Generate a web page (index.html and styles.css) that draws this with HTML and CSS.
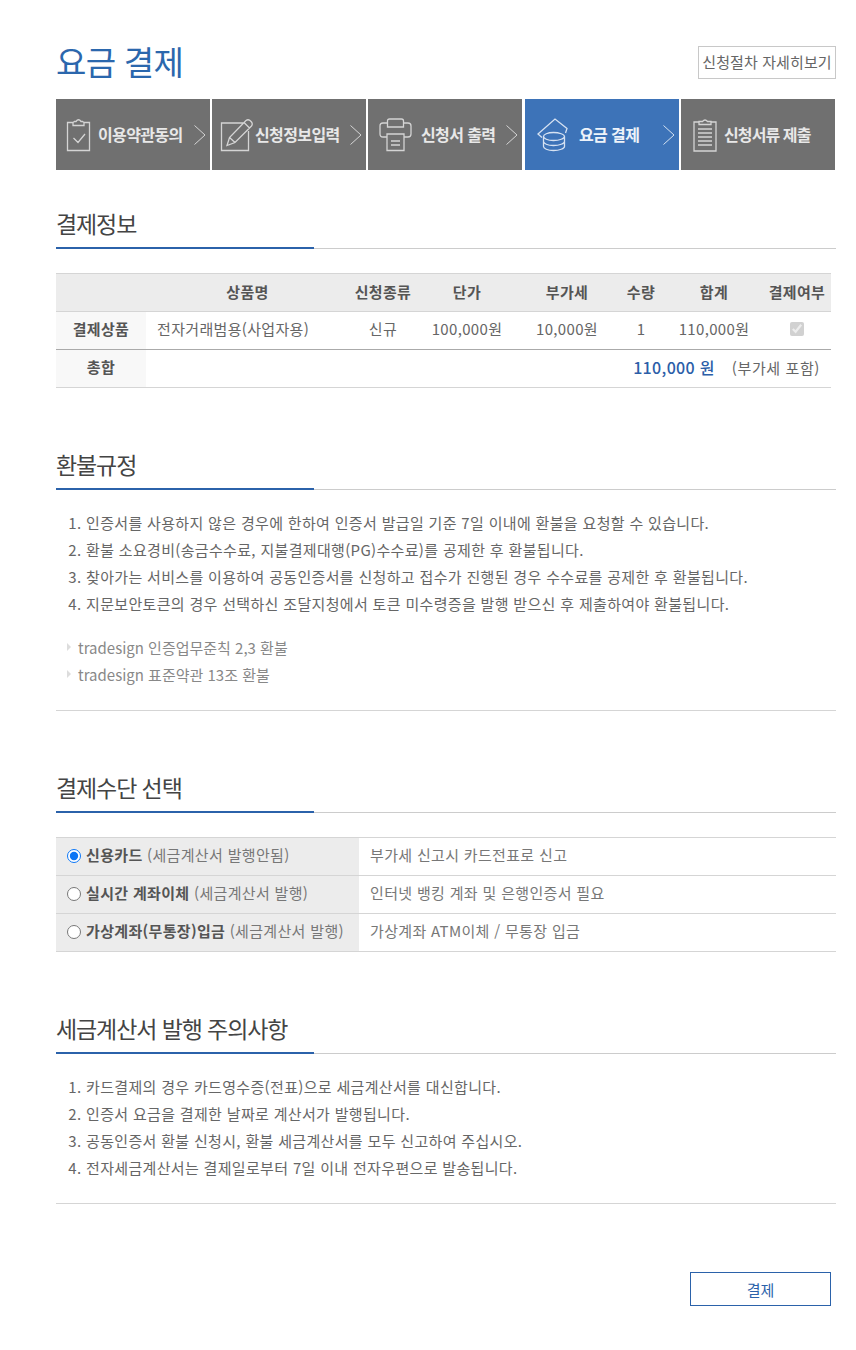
FILE: index.html
```html
<!DOCTYPE html>
<html lang="ko">
<head>
<meta charset="utf-8">
<title>요금 결제</title>
<link rel="stylesheet" href="styles.css">
</head>
<body>
<main class="page">
  <header class="top">
    <h1 class="title">요금 결제</h1>
    <a class="guide" href="#">신청절차 자세히보기</a>
  </header>

  <ol class="steps">
    <li class="step s1">
      <svg class="ico" width="25" height="34" viewBox="0 0 25 34"><path d="M7 4.500H1.500v28h22v-28H18M7 4.500l1.500-1H10Q12.500 0 15 3.500h1.500l1.500 1V7.500H7ZM7.500 20l4.500 4.500 7-8.500"/></svg>
      <span class="lbl">이용약관동의</span>
      <svg class="chev" width="12" height="20" viewBox="0 0 12 20"><path d="M.500.500l10.500 9.500-10.500 9.500"/></svg>
    </li>
    <li class="step s2">
      <svg class="ico" width="33" height="34" viewBox="0 0 33 34"><path d="M24 5H1.500v27.500h27V13M7 27.500l2.500-8L26 2.500q2-1.500 4 0l1.500 1.500q1.500 2 0 4L15 24.500ZM9.500 19.500l5.500 5M24 4.500l5.500 5.500M7 27.500l3 -1"/></svg>
      <span class="lbl">신청정보입력</span>
      <svg class="chev" width="12" height="20" viewBox="0 0 12 20"><path d="M.500.500l10.500 9.500-10.500 9.500"/></svg>
    </li>
    <li class="step s3">
      <svg class="ico" width="33" height="34" viewBox="0 0 33 34"><path d="M8 19H4q-3 0-3-3V8q0-3 3-3h4M25 5h4q3 0 3 3v8q0 3-3 3h-4M8.500 9V3q0-2 2-2h12q2 0 2 2v6ZM8 16h17v16.500H8ZM12 23h9M12 27h9"/></svg>
      <span class="lbl">신청서 출력</span>
      <svg class="chev" width="12" height="20" viewBox="0 0 12 20"><path d="M.500.500l10.500 9.500-10.500 9.500"/></svg>
    </li>
    <li class="step s4 current">
      <svg class="ico" width="33" height="34" viewBox="0 0 33 34"><path d="M5 19.500L1 16 18 1l12 9.500-1.500 4.500M6.500 18.500c0-2 4-4 10-4s11 2 11 4-5 4-11 4-10-2-10-4ZM6.500 18.500v10c0 2 4 4 10 4s11-2 11-4v-10M6.500 23.500c0 2 4 4 10 4s11-2 11-4"/></svg>
      <span class="lbl">요금 결제</span>
      <svg class="chev" width="12" height="20" viewBox="0 0 12 20"><path d="M.500.500l10.500 9.500-10.500 9.500"/></svg>
    </li>
    <li class="step s5">
      <svg class="ico" width="24" height="34" viewBox="0 0 24 34"><path d="M6 4H1v29h22V4h-5M6 6.500V3.500h3.500q2.500-3 5 0H18v3ZM5 11h14M5 15h14M5 19h14M5 23h14M5 27h14"/></svg>
      <span class="lbl">신청서류 제출</span>
    </li>
  </ol>

  <section class="sec first">
    <h2 class="head">결제정보</h2>
    <table class="pay">
      <colgroup>
        <col class="c1"><col class="c2"><col class="c3"><col class="c4"><col class="c5"><col class="c6"><col class="c7"><col class="c8">
      </colgroup>
      <thead>
        <tr>
          <th></th><th>상품명</th><th>신청종류</th><th>단가</th><th>부가세</th><th>수량</th><th>합계</th><th>결제여부</th>
        </tr>
      </thead>
      <tbody>
        <tr class="item">
          <th>결제상품</th>
          <td class="name">전자거래범용(사업자용)</td>
          <td>신규</td>
          <td>100,000원</td>
          <td>10,000원</td>
          <td>1</td>
          <td>110,000원</td>
          <td><input class="chk" type="checkbox" checked disabled></td>
        </tr>
        <tr class="total">
          <th>총합</th>
          <td colspan="7" class="sum"><strong>110,000 원</strong><span class="vat">(부가세 포함)</span></td>
        </tr>
      </tbody>
    </table>
  </section>

  <section class="sec refund-sec">
    <h2 class="head">환불규정</h2>
    <ol class="notes">
      <li>인증서를 사용하지 않은 경우에 한하여 인증서 발급일 기준 7일 이내에 환불을 요청할 수 있습니다.</li>
      <li>환불 소요경비(송금수수료, 지불결제대행(PG)수수료)를 공제한 후 환불됩니다.</li>
      <li>찾아가는 서비스를 이용하여 공동인증서를 신청하고 접수가 진행된 경우 수수료를 공제한 후 환불됩니다.</li>
      <li>지문보안토큰의 경우 선택하신 조달지청에서 토큰 미수령증을 발행 받으신 후 제출하여야 환불됩니다.</li>
    </ol>
    <ul class="refs">
      <li>tradesign 인증업무준칙 2,3 환불</li>
      <li>tradesign 표준약관 13조 환불</li>
    </ul>
    <hr class="rule">
  </section>

  <section class="sec method-sec">
    <h2 class="head">결제수단 선택</h2>
    <div class="methods">
      <label class="m-l"><input type="radio" name="pay" checked><b>신용카드</b> (세금계산서 발행안됨)</label>
      <div class="m-r">부가세 신고시 카드전표로 신고</div>
      <label class="m-l"><input type="radio" name="pay"><b>실시간 계좌이체</b> (세금계산서 발행)</label>
      <div class="m-r">인터넷 뱅킹 계좌 및 은행인증서 필요</div>
      <label class="m-l"><input type="radio" name="pay"><b>가상계좌(무통장)입금</b> (세금계산서 발행)</label>
      <div class="m-r">가상계좌 ATM이체 / 무통장 입금</div>
    </div>
  </section>

  <section class="sec tax-sec">
    <h2 class="head">세금계산서 발행 주의사항</h2>
    <ol class="notes">
      <li>카드결제의 경우 카드영수증(전표)으로 세금계산서를 대신합니다.</li>
      <li>인증서 요금을 결제한 날짜로 계산서가 발행됩니다.</li>
      <li>공동인증서 환불 신청시, 환불 세금계산서를 모두 신고하여 주십시오.</li>
      <li>전자세금계산서는 결제일로부터 7일 이내 전자우편으로 발송됩니다.</li>
    </ol>
    <hr class="rule">
  </section>

  <div class="actions"><button class="submit" type="button">결제</button></div>
</main>
</body>
</html>
```

FILE: styles.css
```css
* { box-sizing: border-box; }
html, body { margin: 0; padding: 0; background: #fff; }
body {
  font-family: "Noto Sans CJK KR", "Noto Sans", sans-serif;
  font-size: 15px;
  letter-spacing: 0.33px;
  color: #666;
}
.page { width: 780px; margin-left: 56px; height: 1350px; overflow: hidden; padding-top: 36px; }

.top { display: flex; justify-content: space-between; align-items: flex-start; height: 63px; }
.title { margin: 0; font-size: 33px; line-height: 50px; font-weight: 400; color: #2b67ad; letter-spacing: -0.7px; }
.guide {
  margin-top: 10px; width: 138px; height: 33px; border: 1px solid #c8c8c8;
  font-size: 15px; letter-spacing: 0.1px; line-height: 29px; color: #666; text-align: center; text-decoration: none; white-space: nowrap;
}

.steps { list-style: none; margin: 0; padding: 0; display: flex; height: 71px; }
.step {
  width: 154px; margin-right: 2px; background: #707070; display: flex; align-items: center;
  color: #e8e8e8; position: relative;
}
.s3 { margin-right: 3px; }
.s5 { margin-right: 0; }
.s1 { padding-left: 10px; }
.s2 { padding-left: 8px; }
.s3 { padding-left: 11px; }
.s4 { padding-left: 12px; }
.s5 { padding-left: 12px; }
.current { background: #3d73b8; }
.lbl { font-size: 16px; font-weight: 700; letter-spacing: -0.6px; white-space: nowrap; margin-top: -2px; }
.s1 .lbl { margin-left: 7px; }
.s2 .lbl { margin-left: 2px; }
.s3 .lbl { margin-left: 9px; }
.s4 .lbl { margin-left: 9px; }
.s5 .lbl { margin-left: 7px; letter-spacing: -0.9px; }
.ico { flex: none; fill: none; stroke: #d4d4d4; stroke-width: 1.300; }
.current .ico { stroke: #d6e2f2; }
.current .lbl { color: #eef3fa; }
.chev { position: absolute; right: 4px; top: 26px; fill: none; stroke: #d4d4d4; stroke-width: 1; }
.current .chev { stroke: #d6e2f2; }

.first { margin-top: 37px; }
.head {
  margin: 0; height: 42px; font-size: 23px; line-height: 32px; font-weight: 400; color: #444; letter-spacing: -1.1px;
  border-bottom: 1px solid #ccc; position: relative;
}
.head::after {
  content: ""; position: absolute; left: 0; bottom: -1px; width: 258px; height: 2px; background: #2b62aa;
}

.pay { width: 775px; margin-top: 24px; border-collapse: collapse; table-layout: fixed; border-top: 1px solid #d5d5d5; }
.c1 { width: 90px; } .c2 { width: 203px; } .c3 { width: 68px; } .c4 { width: 100px; }
.c5 { width: 100px; } .c6 { width: 48px; } .c7 { width: 98px; } .c8 { width: 68px; }
.pay th, .pay td { height: 38px; padding: 0 0 4px; text-align: center; font-size: 15px; color: #666; white-space: nowrap; }
.pay thead th { background: #ececec; font-weight: 700; color: #555; border-bottom: 1px solid #d5d5d5; padding-bottom: 2px; }
.pay tbody th { background: #f8f8f8; font-weight: 700; color: #555; }
.item th, .item td { border-bottom: 1px solid #aaa; }
.total th, .total td { border-bottom: 1px solid #d5d5d5; }
.pay td.name { text-align: left; padding-left: 11px; }
.pay td.sum { text-align: right; padding-right: 11px; }
.sum strong { font-size: 16px; font-weight: 500; color: #2b5ea8; margin-right: 17px; }
.vat { letter-spacing: 0.6px; }
.chk { margin: 0; width: 14px; height: 14px; vertical-align: -1px; }

.refund-sec { margin-top: 60px; }
.notes { margin: 19px 0 0; padding: 0 0 0 30px; line-height: 27px; }
.refs { list-style: none; margin: 17px 0 0; padding: 0 0 0 22px; line-height: 27px; color: #888; letter-spacing: 0; }
.refs li { position: relative; }
.refs li::before {
  content: ""; position: absolute; left: -11px; top: 9px; border-left: 4px solid #ddd;
  border-top: 4px solid transparent; border-bottom: 4px solid transparent;
}
.rule { margin: 22px 0 0; border: 0; border-top: 1px solid #d5d5d5; }
.method-sec { margin-top: 60px; }

.methods {
  margin-top: 24px; display: grid; grid-template-columns: 303px 1fr; grid-auto-rows: 38px;
  border-top: 1px solid #d5d5d5;
}
.m-l, .m-r { display: flex; align-items: center; border-bottom: 1px solid #d5d5d5; padding-bottom: 4px; white-space: pre; color: #777; }
.m-l { background: #ececec; padding-left: 11px; }
.m-l input { margin: 2px 5px 0 0; width: 14px; height: 14px; accent-color: #0b75f5; }
.m-l b { color: #555; font-weight: 700; }
.m-r { padding-left: 11px; }

.tax-sec { margin-top: 60px; }

.actions { display: flex; justify-content: flex-end; padding-right: 5px; margin-top: 68px; }
.submit {
  width: 141px; height: 34px; background: #fff; border: 1px solid #2b62aa; color: #2b62aa;
  font: 400 15px "Noto Sans CJK KR", sans-serif; padding: 0;
}
```
